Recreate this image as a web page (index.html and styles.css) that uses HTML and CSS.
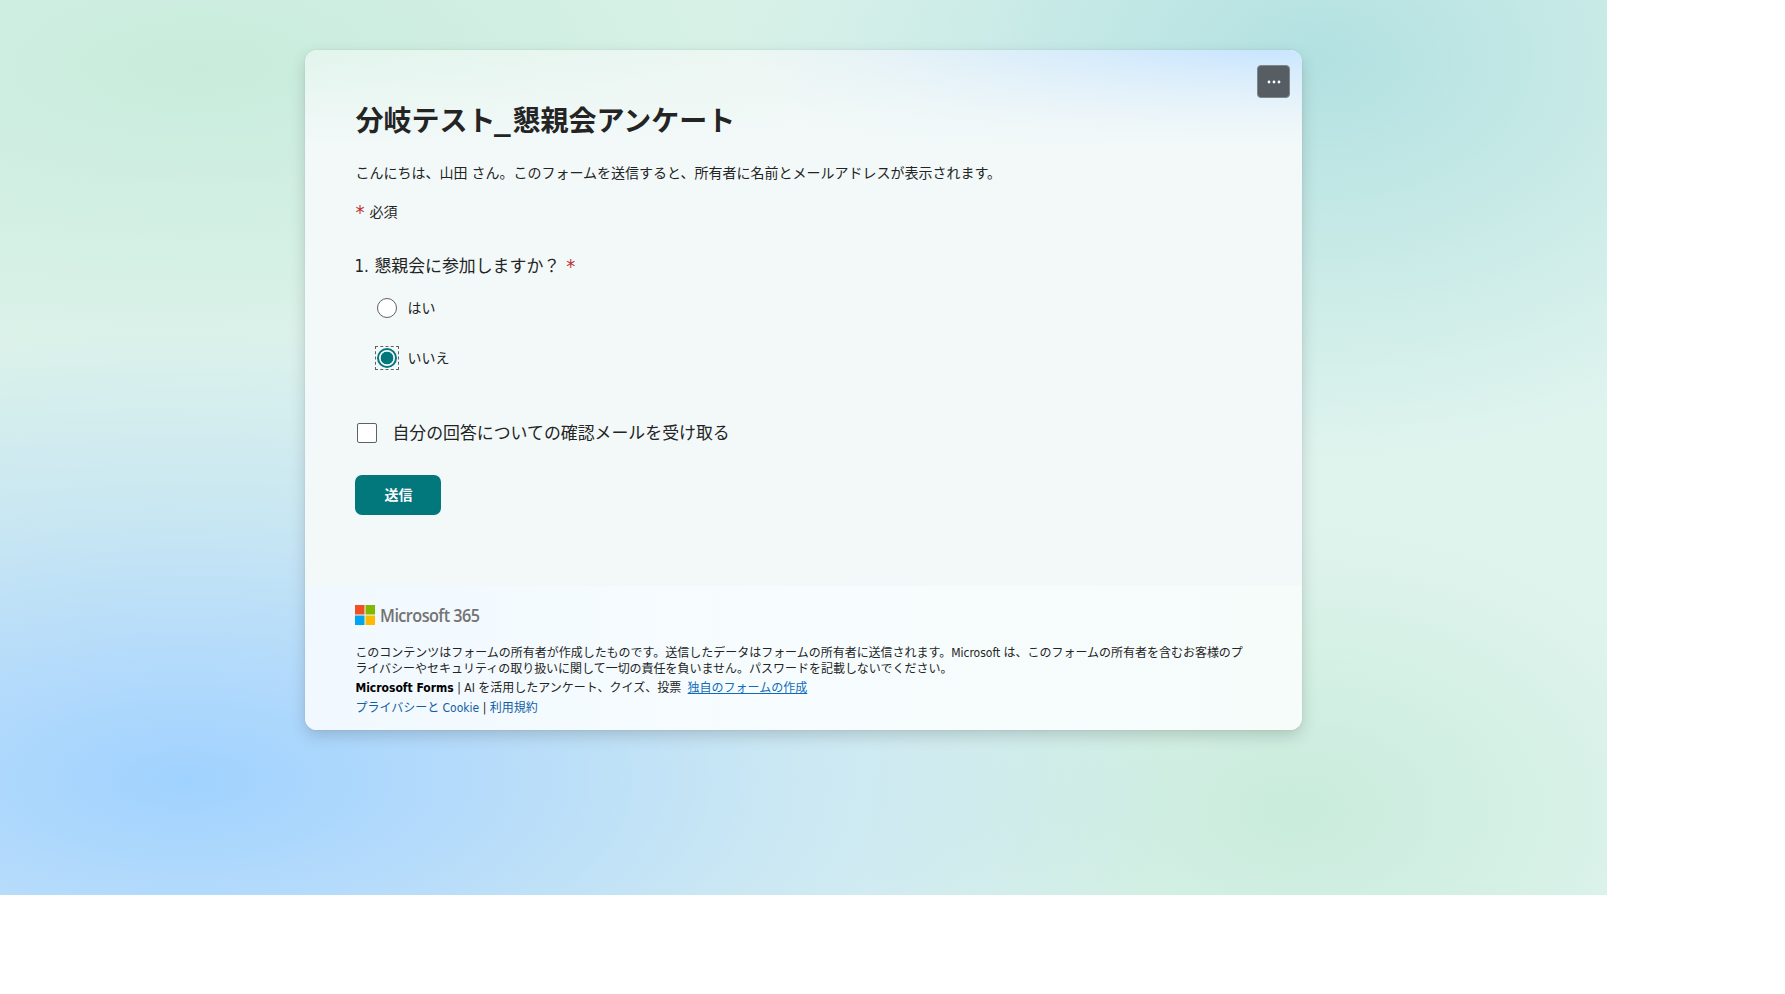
FILE: index.html
```html
<!DOCTYPE html>
<html lang="ja">
<head>
    <meta charset="UTF-8">
    <meta name="viewport" content="width=device-width, initial-scale=1.0">
    <title>分岐テスト_懇親会アンケート</title>
    <link rel="stylesheet" href="styles.css">
</head>
<body>
    <div class="page">
        <form class="card">
            <div class="content">
                <button type="button" class="more" aria-label="その他">
                    <svg width="14" height="4" viewBox="0 0 14 4" fill="#fff">
                        <circle cx="2" cy="2" r="1.4"/>
                        <circle cx="7" cy="2" r="1.4"/>
                        <circle cx="12" cy="2" r="1.4"/>
                    </svg>
                </button>
                <h1 class="title">分岐テスト<span class="underscore">_</span>懇親会アンケート</h1>
                <p class="greeting">こんにちは、山田 さん。このフォームを送信すると、所有者に名前とメールアドレスが表示されます。</p>
                <p class="required"><span class="star">*</span><span>必須</span></p>

                <div class="question"><span class="number">1.</span><span>懇親会に参加しますか？</span><span class="star">*</span></div>
                <div class="choices">
                    <label class="choice"><span class="ring"><input type="radio" name="join" class="radio"></span><span>はい</span></label>
                    <label class="choice"><span class="ring focused"><input type="radio" name="join" class="radio" checked></span><span>いいえ</span></label>
                </div>

                <label class="receipt"><input type="checkbox" class="checkbox"><span>自分の回答についての確認メールを受け取る</span></label>
                <button type="button" class="submit">送信</button>
            </div>

            <footer class="footer">
                <div class="brand">
                    <svg width="20" height="20" viewBox="0 0 20 20">
                        <path fill="#f25022" d="M0 0h9.5v9.5H0z"/>
                        <path fill="#7fba00" d="M10.5 0H20v9.5h-9.5z"/>
                        <path fill="#00a4ef" d="M0 10.5h9.5V20H0z"/>
                        <path fill="#ffb900" d="M10.5 10.5H20V20h-9.5z"/>
                    </svg>
                    <span class="wordmark">Microsoft 365</span>
                </div>
                <p class="notice">このコンテンツはフォームの所有者が作成したものです。送信したデータはフォームの所有者に送信されます。Microsoft は、このフォームの所有者を含むお客様のプライバシーやセキュリティの取り扱いに関して一切の責任を負いません。パスワードを記載しないでください。</p>
                <p class="forms"><b>Microsoft Forms</b> | AI を活用したアンケート、クイズ、投票 <a href="#" class="create">独自のフォームの作成</a></p>
                <p class="links"><a href="#">プライバシーと Cookie</a> | <a href="#">利用規約</a></p>
            </footer>
        </form>
    </div>
</body>
</html>
```

FILE: styles.css
```css
* {
    box-sizing: border-box;
}
body {
    margin: 0;
    background: #fff;
    font-family: "DejaVu Sans Condensed", "Noto Sans CJK JP", sans-serif;
    color: #242424;
}
h1, p {
    margin: 0;
}
.page {
    width: 1607px;
    height: 895px;
    padding: 50px 304px 0 305.4px;
    background:
        radial-gradient(ellipse 1000px 450px at 185px 780px, #a0d2ff 0%, rgba(172, 214, 255, 0.82) 28%, rgba(172, 214, 255, 0.42) 58%, rgba(172, 214, 255, 0) 100%),
        radial-gradient(ellipse 760px 300px at 200px 65px, #c8ecdc 0%, rgba(200, 236, 220, 0) 100%),
        radial-gradient(ellipse 600px 400px at 1320px 60px, #b2e1e1 0%, rgba(178, 225, 225, 0) 100%),
        radial-gradient(ellipse 440px 290px at 1295px 810px, #c9ecdc 0%, rgba(201, 236, 220, 0) 100%),
        linear-gradient(to right, #dcf2ea, #e0f4ee);
}
.card {
    width: 997px;
    height: 680px;
    border-radius: 12px;
    overflow: hidden;
    background: #f3f9f9;
    box-shadow: 0 6px 16px rgba(0, 0, 0, 0.16), 0 0 2px rgba(0, 0, 0, 0.1);
}
.content {
    position: relative;
    height: 536px;
    padding: 52px 50px 0;
    background:
        linear-gradient(to bottom, rgba(243, 249, 249, 0) 0, #f3f9f9 100px),
        radial-gradient(ellipse 520px 150px at 960px 0, #c9e5ff 0%, rgba(201, 229, 255, 0) 100%),
        linear-gradient(to right, #e2f5ed, #f0f7f4 60%);
}
.more {
    position: absolute;
    top: 15px;
    right: 12px;
    display: flex;
    align-items: center;
    justify-content: center;
    width: 33px;
    height: 33px;
    padding: 0;
    border: 1px solid #7d868b;
    border-radius: 4px;
    background: #565e63;
}
.title {
    height: 40px;
    font-size: 28px;
    line-height: 40px;
    font-weight: bold;
}
.underscore {
    display: inline-block;
    width: 17px;
    transform: translate(-1px, -1px) scaleX(1.32);
    transform-origin: left;
}
.greeting {
    margin-top: 20px;
    font-size: 14px;
    line-height: 22px;
}
.star {
    color: #bc2f32;
}
.required {
    display: flex;
    gap: 5px;
    margin-top: 17px;
    font-size: 14px;
    line-height: 22px;
}
.required .star {
    font-size: 20px;
}
.question {
    display: flex;
    margin: 31px 0 0 -1px;
    font-size: 16.9px;
    line-height: 24px;
}
.question .number {
    width: 20px;
}
.question .star {
    margin-left: 6px;
    font-size: 20px;
}
.choices {
    padding: 18px 0 0 20px;
}
.choice {
    display: flex;
    align-items: center;
    gap: 8px;
    height: 24px;
    margin-bottom: 26px;
    font-size: 14px;
    line-height: 24px;
}
.ring {
    display: flex;
    padding: 1px;
    border: 1px solid transparent;
}
.focused {
    border: 1px dashed #616161;
}
.radio {
    appearance: none;
    width: 20px;
    height: 20px;
    margin: 0;
    border: 1px solid #616161;
    border-radius: 50%;
    background: #fff;
}
.radio:checked {
    border: 2px solid #03787c;
    background: radial-gradient(circle, #03787c 6px, #fff 6.7px);
}
.receipt {
    display: flex;
    align-items: center;
    gap: 15px;
    height: 24px;
    margin: 51px 0 0 2px;
    font-size: 16.9px;
    line-height: 24px;
}
.checkbox {
    appearance: none;
    width: 20px;
    height: 20px;
    margin: 0;
    border: 1px solid #616161;
    border-radius: 2px;
    background: #fff;
}
.submit {
    display: block;
    width: 86px;
    height: 40px;
    margin-top: 30px;
    padding-bottom: 3px;
    border: none;
    border-radius: 7px;
    background: #03787c;
    color: #fff;
    font: bold 14px "Noto Sans CJK JP", sans-serif;
}
.footer {
    height: 144px;
    padding: 19px 50px 0;
    background: linear-gradient(to right, #f1f8ff, #f7fdfe 50%, #f6fcfa);
    font-size: 12px;
}
.brand {
    display: flex;
    align-items: center;
    gap: 5px;
    height: 20px;
    margin-bottom: 20px;
    color: #737373;
}
.wordmark {
    padding-bottom: 1px;
    font: 600 18px "Open Sans", sans-serif;
    letter-spacing: -0.6px;
    transform: scaleX(0.9);
    transform-origin: left;
}
.notice {
    line-height: 16px;
    letter-spacing: -0.02px;
}
.forms {
    margin-top: 3px;
    line-height: 17px;
}
.forms b {
    color: #000;
}
.links {
    margin-top: 3px;
    line-height: 17px;
}
.footer a {
    color: #115ea3;
    text-decoration: none;
}
.footer .create {
    margin-left: 3px;
    color: #0f6cbd;
    text-decoration: underline;
}
```
